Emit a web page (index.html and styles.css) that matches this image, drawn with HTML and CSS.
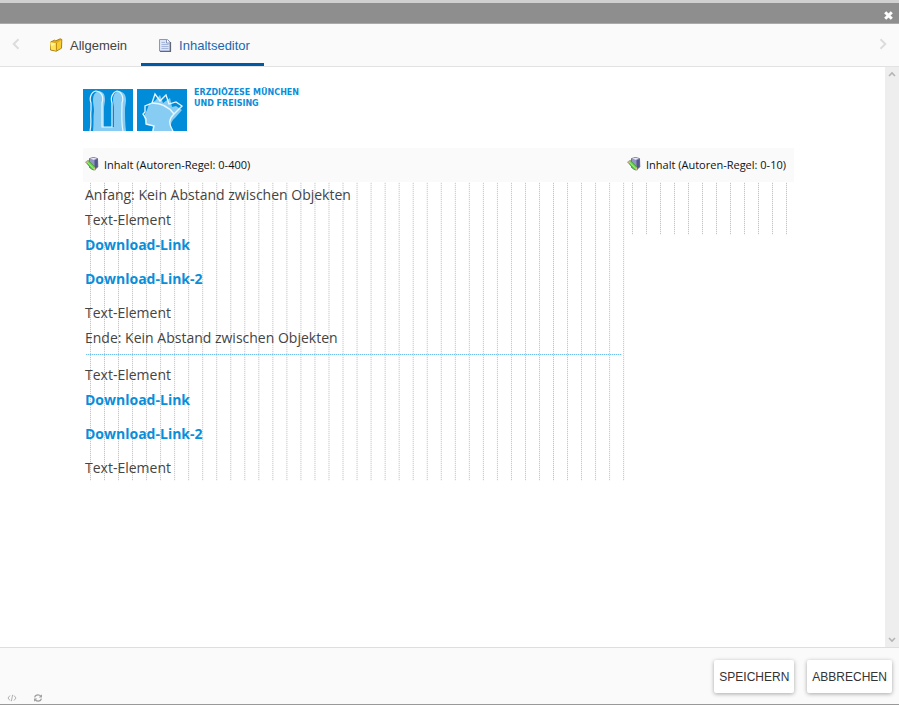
FILE: index.html
```html
<!DOCTYPE html>
<html lang="de">
<head>
<meta charset="utf-8">
<title>Inhaltseditor</title>
<link rel="stylesheet" href="styles.css">
</head>
<body>
<header class="titlebar">
  <button class="icon-button" type="button" aria-label="Schließen">
    <svg width="9" height="9" viewBox="0 0 9 9"><path d="M1.2 1.2l6.6 6.6M7.8 1.2L1.2 7.8" stroke="#fff" stroke-width="3"/></svg>
  </button>
</header>
<nav class="tabs">
  <button class="icon-button tab-arrow" type="button" aria-label="Zurück">
    <svg width="8" height="12" viewBox="0 0 8 12"><path d="M6.5 1.2L1.7 6l4.8 4.8" fill="none" stroke="#dcdcdc" stroke-width="2"/></svg>
  </button>
  <button class="tab" type="button">
    <svg width="16" height="16" viewBox="0 0 16 16"><path d="M2.5 5l4-1.8 1.3.6 4.4-2 1.6.7-.3 8.7-5.2 3L2.5 13z" fill="#e0ab1c" stroke="#a37814" stroke-width=".9"/><path d="M2.2 5.3l6 .9.3 7.5-5.6-1.2z" fill="#ffe458"/><path d="M2.4 5.6l5.6.9-4.8 3z" fill="#fff4a6"/><path d="M8.6 6.3l4.6-3.1-.3 7.7-4.1 2.4z" fill="#f6ce32"/><path d="M8.4 6v7.6" stroke="#b98714"/></svg>
    <span>Allgemein</span>
  </button>
  <button class="tab tab-active" type="button">
    <svg width="16" height="16" viewBox="0 0 16 16"><path d="M2.5 2.5h8l2.5 2.5v9H2.5z" fill="#dce5f8" stroke="#8a98bc"/><path d="M13.5 5v9.5H3" fill="none" stroke="#626875" stroke-width="1.2"/><path d="M9.5 2.5V6H13" fill="#fff" stroke="#8a98bc"/><path d="M4.5 5.5h3.5M4.5 7.5h7M4.5 9.5h7M4.5 11.5h7" stroke="#a6b6dc"/></svg>
    <span>Inhaltseditor</span>
  </button>
  <button class="icon-button tab-arrow tab-next" type="button" aria-label="Weiter">
    <svg width="8" height="12" viewBox="0 0 8 12"><path d="M1.5 1.2L6.3 6l-4.8 4.8" fill="none" stroke="#dcdcdc" stroke-width="2"/></svg>
  </button>
</nav>
<div class="workspace">
  <main class="page">
    <div class="brand">
      <svg width="104" height="42" viewBox="0 0 104 42" aria-hidden="true">
        <path d="M0 0h50v42H0zM54 0h50v42H54z" fill="#008cd9"/>
        <path d="M10 42c1-8 0-14 1-20 0-5-1-7-1-11 0-5 2-8 6-9 5 1 6 4 6 9 0 3-1 5-1 8v19h10V19c0-3-1-5-1-8 0-5 2-8 6-9 5 1 7 4 7 9 0 4-1 6-1 9 0 7 0 14 1 22z" fill="#87cdf3"/>
        <path d="M7 42c2-8 0-15 1-21V14c-2-5 0-11 5-12 6 1 8 6 6 12v24h10V14c-2-6 1-11 5-12 5 1 7 7 5 12 0 10-1 19 1 28" fill="none" stroke="#e8f7ff" stroke-width="1.2"/>
        <path d="M77 6l3 8 7-5 2 9 4-1 6 4-7 8c-5 4-5 9-2 13H69l1-5-7-1-2-9 3-6 2-6 6-3z" fill="#87cdf3"/>
        <path d="M70 42l1-5-8-2v-5l-3-5 2-2v-6l7-3 3-9 5 7 6-6 3 9 7-2 6 4-8 8c-5 5-6 9-1 17M69 14c9 0 17 4 22 11" fill="none" stroke="#e8f7ff" stroke-width="1.3"/>
      </svg>
      <div class="brand-name">Erzdiözese München<br>und Freising</div>
    </div>
    <div class="columns">
      <section class="column">
        <h2 class="column-head">
          <svg width="16" height="16" viewBox="0 0 16 16"><path d="M5.5 2.5l4-.9 4 .9.3 8.5-3.8 3-4.5-2.5z" fill="#9194c4" stroke="#72738f"/><path d="M6 2.6l3.6-.7 3.4.7-3.4 1.2z" fill="#f2f2ff"/><path d="M10.5 4.2l3-1.2.2 7.7-3.2 2.6z" fill="#54578c"/><path d="M1.7 6l2.5-1.7 6.5 6.4.6 3.3-3.5-.6z" fill="#62cf48" stroke="#42943a" stroke-width=".7"/><path d="M3 5.7l6.2 6.2" stroke="#b8f489"/><path d="M8.6 13l2-2 .7 3z" fill="#f2c391"/><path d="M1.3 5.9l2.6-1.8.8.8-2.6 2z" fill="#e4a0a0"/></svg>
          <span>Inhalt (Autoren-Regel: 0-400)</span>
        </h2>
        <div class="grid-lines text">
          <p>Anfang: Kein Abstand zwischen Objekten</p>
          <p>Text-Element</p>
          <p class="download"><a href="#">Download-Link</a></p>
          <p class="download"><a href="#">Download-Link-2</a></p>
          <p>Text-Element</p>
          <p>Ende: Kein Abstand zwischen Objekten</p>
          <hr>
          <p>Text-Element</p>
          <p class="download"><a href="#">Download-Link</a></p>
          <p class="download"><a href="#">Download-Link-2</a></p>
          <p>Text-Element</p>
        </div>
      </section>
      <section class="column">
        <h2 class="column-head">
          <svg width="16" height="16" viewBox="0 0 16 16"><path d="M5.5 2.5l4-.9 4 .9.3 8.5-3.8 3-4.5-2.5z" fill="#9194c4" stroke="#72738f"/><path d="M6 2.6l3.6-.7 3.4.7-3.4 1.2z" fill="#f2f2ff"/><path d="M10.5 4.2l3-1.2.2 7.7-3.2 2.6z" fill="#54578c"/><path d="M1.7 6l2.5-1.7 6.5 6.4.6 3.3-3.5-.6z" fill="#62cf48" stroke="#42943a" stroke-width=".7"/><path d="M3 5.7l6.2 6.2" stroke="#b8f489"/><path d="M8.6 13l2-2 .7 3z" fill="#f2c391"/><path d="M1.3 5.9l2.6-1.8.8.8-2.6 2z" fill="#e4a0a0"/></svg>
          <span>Inhalt (Autoren-Regel: 0-10)</span>
        </h2>
        <div class="grid-lines empty"></div>
      </section>
    </div>
  </main>
  <div class="scrollbar" aria-hidden="true">
    <svg width="8" height="6" viewBox="0 0 8 6"><path d="M1 5l3-3 3 3" fill="none" stroke="#b4b4b4" stroke-width="1.6"/></svg>
    <svg width="8" height="6" viewBox="0 0 8 6"><path d="M1 1l3 3 3-3" fill="none" stroke="#b4b4b4" stroke-width="1.6"/></svg>
  </div>
</div>
<footer class="footer">
  <div class="tools">
    <button class="icon-button" type="button" aria-label="Quelltext">
      <svg width="10" height="8" viewBox="0 0 10 8"><path d="M3 1.5L1 4l2 2.5M7 1.5L9 4 7 6.5M5.6.8L4.4 7.2" fill="none" stroke="#b0b0b0"/></svg>
    </button>
    <button class="icon-button" type="button" aria-label="Neu laden">
      <svg width="10" height="8" viewBox="0 0 10 8"><path d="M1.6 3.4C2.2.5 6 .2 7.8 2.2M8.4 4.6C7.8 7.5 4 7.8 2.2 5.8" fill="none" stroke="#a2a2a2" stroke-width="1.4"/><path d="M9 .3v3.2H5.8zM1 7.7V4.5h3.2z" fill="#a2a2a2"/></svg>
    </button>
  </div>
  <div class="actions">
    <button class="action" type="button">SPEICHERN</button>
    <button class="action" type="button">ABBRECHEN</button>
  </div>
</footer>
</body>
</html>
```
FILE: styles.css
```css
* {
  box-sizing: border-box;
}

body {
  display: flex;
  flex-direction: column;
  min-height: 100vh;
  margin: 0;
  background: #fff;
  color: #444;
  font-family: "Liberation Sans", Arial, sans-serif;
  font-size: 13px;
}

button {
  border: 0;
  font: inherit;
}

svg {
  display: block;
  flex: none;
}

.icon-button {
  padding: 0;
  background: none;
}

.titlebar {
  display: flex;
  align-items: center;
  justify-content: flex-end;
  height: 24px;
  padding: 4px 6px 0 0;
  border-top: 3px solid #d0d0d0;
  border-bottom: 1px solid #aaa;
  background: #8e8e8e;
}

.tabs {
  display: flex;
  height: 43px;
  padding: 0 12px;
  border-bottom: 1px solid #e2e2e2;
  background: #fafafa;
}

.tab-arrow {
  padding-bottom: 2px;
}

.tab-next {
  margin-left: auto;
}

.tab {
  display: flex;
  align-items: center;
  gap: 6px;
  padding: 3px 14px 0 16px;
  border-bottom: 3px solid transparent;
  background: none;
  color: #444;
}

.tab-arrow + .tab {
  margin-left: 12px;
}

.tab-active {
  border-bottom-color: #0059a3;
  color: #1b67ac;
}

.workspace {
  display: flex;
  flex: 1;
}

.page {
  flex: 1;
  padding: 22px 91px 0 83px;
}

.scrollbar {
  display: flex;
  flex-direction: column;
  align-items: center;
  justify-content: space-between;
  width: 14px;
  padding: 4px 0;
  background: #eee;
}

.brand {
  display: flex;
  gap: 7px;
  margin-bottom: 17px;
}

.brand-name {
  margin-top: -2px;
  color: #0a8ed9;
  font-family: "DejaVu Sans", sans-serif;
  font-size: 8px;
  font-weight: bold;
  line-height: 11px;
  text-transform: uppercase;
}

.columns {
  display: grid;
  grid-template-columns: 542fr 169fr;
  align-items: start;
}

.column-head {
  display: flex;
  align-items: center;
  gap: 4px;
  height: 34px;
  margin: 0;
  padding: 0 0 2px 1px;
  background: #fafafa;
  color: #111;
  font-family: "Open Sans", sans-serif;
  font-size: 11px;
  font-weight: normal;
  white-space: nowrap;
}

.grid-lines {
  margin-left: 2px;
  background-image:
    repeating-linear-gradient(to bottom, #fffc 0 1px, transparent 1px 2px),
    linear-gradient(to right, #c4c4c4 1px, transparent 1px);
  background-position: 0 0, 5px 0;
  background-size: auto, 2.6% 100%;
}

.empty {
  height: 53px;
  margin-right: 6px;
  background-size: auto, 14px 100%;
}

.text {
  padding-bottom: 1px;
  font-family: "Open Sans", sans-serif;
  font-size: 14px;
  line-height: 25px;
}

.text p {
  margin: 0;
}

.text .download + .download,
.text .download + p {
  margin-top: 9px;
}

.text a {
  color: #0a8ed9;
  font-weight: bold;
  text-decoration: none;
}

.text hr {
  height: 1px;
  margin: 4px 3px 7px 1px;
  border: 0;
  background: repeating-linear-gradient(to right, #70c1eb 0 1px, #cdeaf8 1px 2px);
}

.footer {
  display: flex;
  align-items: flex-end;
  justify-content: space-between;
  height: 58px;
  padding: 0 7px 2px;
  border-top: 1px solid #dedede;
  border-bottom: 1px solid #999;
  background: #fafafa;
}

.tools {
  display: flex;
  gap: 16px;
}

.actions {
  display: flex;
  gap: 13px;
  margin-bottom: 9px;
}

.action {
  height: 33px;
  padding: 0 5px;
  border-radius: 2px;
  background: #fff;
  color: #333;
  font-size: 12px;
  box-shadow: 0 1px 4px #0005;
}
```
